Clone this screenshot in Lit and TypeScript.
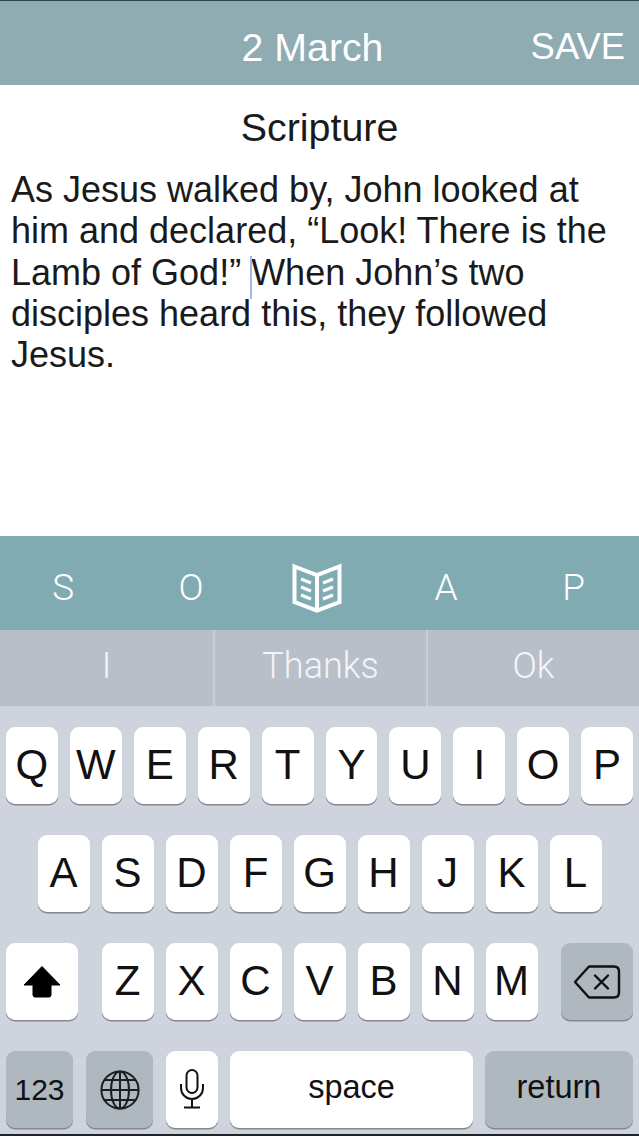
import { LitElement, html, css, svg } from "lit";
import { customElement } from "lit/decorators.js";

const rows = ["QWERTYUIOP", "ASDFGHJKL", "ZXCVBNM"];

const letter = (c: string) => html`<div class="key letter">${c}</div>`;

const book = svg`<svg class="book" width="50" height="50" viewBox="0 0 50 50" fill="none" stroke="#fff" stroke-linejoin="miter">
  <path d="M2.5 3.5 L25 12 L47.5 3.5 V39 L25 47.5 L2.5 39 Z" stroke-width="4"/>
  <path d="M25 12 V47.5" stroke-width="4"/>
  <path d="M9 16 L19 20 M9 24 L19 28 M9 32 L19 36 M41 16 L31 20 M41 24 L31 28 M41 32 L31 36" stroke-width="3.2"/>
</svg>`;

const shift = svg`<svg width="38" height="34" viewBox="0 0 38 34"><path d="M19 1.5 L37 20 H28 V30 Q28 32 26 32 H12 Q10 32 10 30 V20 H1 Z" fill="#000" stroke="#000" stroke-width="1" stroke-linejoin="round"/></svg>`;

const del = svg`<svg width="48" height="34" viewBox="0 0 48 34" fill="none" stroke="#111" stroke-width="2.4" stroke-linejoin="round" stroke-linecap="round"><path d="M16 1.5 H41 Q46 1.5 46 6.5 V27.5 Q46 32.5 41 32.5 H16 L2 17 Z"/><path d="M22 10.5 L35 23.5 M35 10.5 L22 23.5"/></svg>`;

const globe = svg`<svg width="40" height="40" viewBox="0 0 40 40" fill="none" stroke="#1a1f24" stroke-width="2"><circle cx="20" cy="20" r="18.6"/><ellipse cx="20" cy="20" rx="9" ry="18.6"/><path d="M20 1.4 V38.6 M1.4 20 H38.6 M4.5 10 H35.5 M4.5 30 H35.5"/></svg>`;

const mic = svg`<svg width="26" height="40" viewBox="0 0 26 40" fill="none" stroke="#111" stroke-width="2"><rect x="7.5" y="1" width="11" height="23" rx="5.5"/><path d="M2 15 V19 A11 11 0 0 0 24 19 V15 M13 30 V38 M5 38.5 H21"/></svg>`;

@customElement("app-root")
export class AppRoot extends LitElement {
  static styles = css`
    :host { display: block; width: 639px; height: 1136px; overflow: hidden; background: #fff; font-family: "Liberation Sans", Arial, sans-serif; }
    .page { display: flex; flex-direction: column; height: 1136px; }
    .header { height: 85px; flex: none; box-sizing: border-box; background: #8facb3; border-top: 1px solid #2a4350; display: grid; grid-template-columns: 1fr auto 1fr; align-items: center; color: #fff; font-size: 39.3px; padding: 8px 14px 0 0; }
    .header .title { grid-column: 2; }
    .header .save { grid-column: 3; justify-self: end; font-size: 36.4px; }
    .content { flex: 1; min-height: 0; padding: 0 11px; color: #1a1a1a; }
    .heading { text-align: center; font-size: 39.4px; line-height: 42px; padding-top: 21px; margin-bottom: 21px; }
    .text { font-size: 36px; line-height: 41.3px; margin: 0; }
    .line { display: block; white-space: nowrap; }
    .caret { position: relative; display: inline-block; width: 0; height: 0; }
    .caret::after { content: ""; position: absolute; left: -1px; top: -29px; width: 2px; height: 43px; background: #a6b6ea; }
    .tabs { height: 94px; flex: none; box-sizing: border-box; padding: 8px 2px 0 0; background: #80abb2; display: grid; grid-template-columns: repeat(5, 127.6px); align-items: center; color: #fff; font-family: Roboto, sans-serif; font-weight: 300; font-size: 37px; justify-content: center; }
    .tabs > div { display: flex; justify-content: center; align-items: center; }
    .tabs .book-cell { margin-left: -4px; margin-top: 2px; }
    .suggest { height: 76px; flex: none; background: #b9bfc9; display: grid; grid-template-columns: 1fr 1fr 1fr; color: #f4f5f7; font-family: Roboto, sans-serif; font-weight: 300; font-size: 36px; }
    .suggest > div { display: flex; align-items: center; justify-content: center; padding-bottom: 4px; }
    .suggest > div + div { border-left: 2px solid #c9cdd5; }
    .kb { height: 430px; flex: none; background: #cfd3dd; box-sizing: border-box; padding: 21px 6px 0; display: flex; flex-direction: column; gap: 31px; border-bottom: 2px solid #1f2326; }
    .row { display: flex; gap: 12px; justify-content: center; }
    .key { height: 77px; box-sizing: border-box; border-radius: 9px; background: #fff; box-shadow: 0 1.5px 0 #84878d; display: flex; align-items: center; justify-content: center; color: #111; }
    .letter { width: 52px; font-size: 42px; padding-bottom: 2px; }
    .dark { background: #afb7bf; }
    .row3 { justify-content: space-between; }
    .letters { display: flex; gap: 12px; }
    .wide { width: 72px; }
    .row4 { justify-content: flex-start; }
    .gap1 { margin-left: 1px; }
    .word { font-size: 32.5px; padding-bottom: 4px; }
    .num { width: 67px; font-size: 30px; }
    .space { flex: 1; }
    .return { width: 148px; }
  `;

  render() {
    return html`<div class="page">
      <div class="header"><span class="title">2 March</span><span class="save">SAVE</span></div>
      <div class="content">
        <div class="heading">Scripture</div>
        <p class="text">
          <span class="line">As Jesus walked by, John looked at</span>
          <span class="line">him and declared, “Look! There is the</span>
          <span class="line">Lamb of God!” <span class="caret"></span>When John’s two</span>
          <span class="line">disciples heard this, they followed</span>
          <span class="line">Jesus.</span>
        </p>
      </div>
      <div class="tabs">
        <div>S</div><div>O</div><div class="book-cell">${book}</div><div>A</div><div>P</div>
      </div>
      <div class="suggest"><div>I</div><div>Thanks</div><div>Ok</div></div>
      <div class="kb">
        <div class="row">${[...rows[0]].map(letter)}</div>
        <div class="row">${[...rows[1]].map(letter)}</div>
        <div class="row row3">
          <div class="key wide">${shift}</div>
          <div class="letters">${[...rows[2]].map(letter)}</div>
          <div class="key wide dark">${del}</div>
        </div>
        <div class="row row4">
          <div class="key dark num">123</div>
          <div class="key dark num gap1">${globe}</div>
          <div class="key letter gap1">${mic}</div>
          <div class="key word space">space</div>
          <div class="key dark word return">return</div>
        </div>
      </div>
    </div>`;
  }
}
